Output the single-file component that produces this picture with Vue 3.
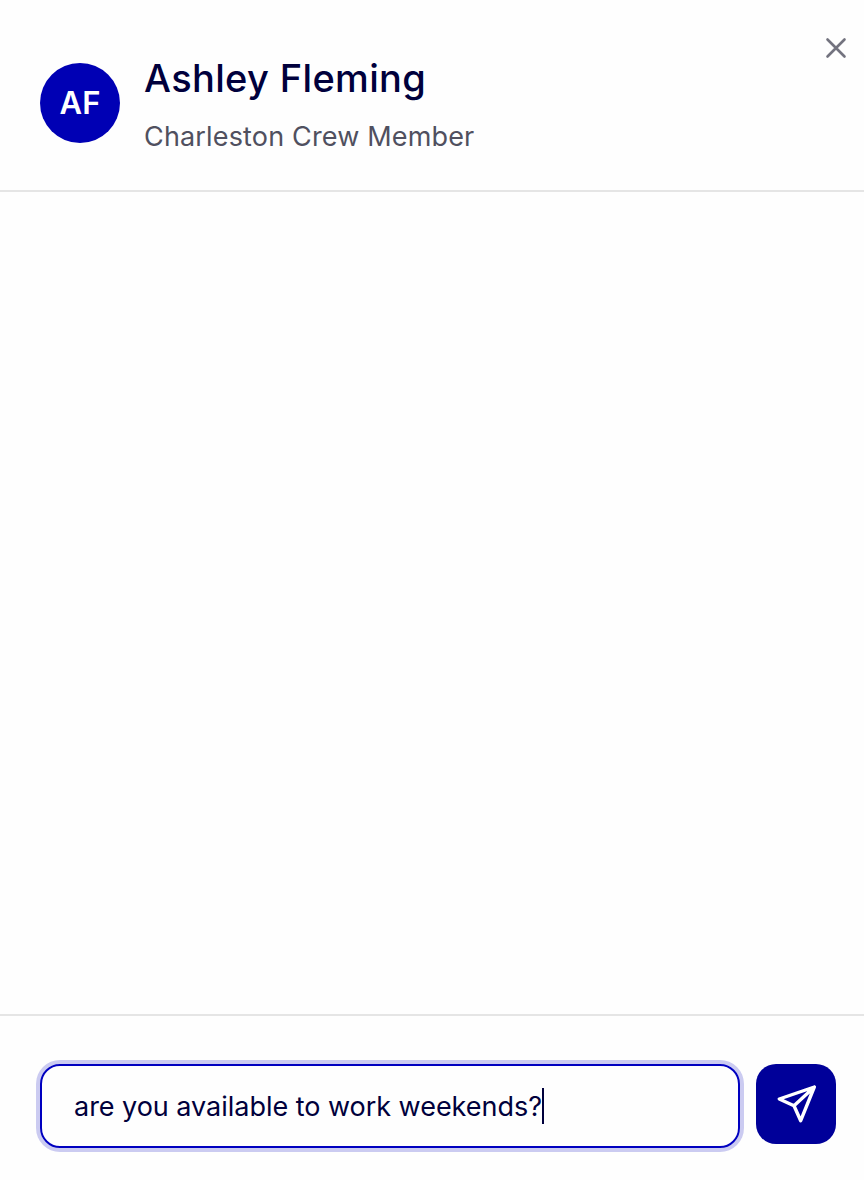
<script setup>
const name = 'Ashley Fleming';
const role = 'Charleston Crew Member';
const message = 'are you available to work weekends?';
</script>

<template>
  <div class="panel">
    <header class="head">
      <div class="avatar"><span class="initials">AF</span></div>
      <div class="who">
        <div class="name">{{ name }}</div>
        <div class="role">{{ role }}</div>
      </div>
      <button class="close" aria-label="Close">
        <svg width="24" height="24" viewBox="0 0 24 24" fill="none" stroke="#73737f" stroke-width="2.6" stroke-linecap="round">
          <path d="M3.5 3.5 L20.5 20.5 M20.5 3.5 L3.5 20.5" />
        </svg>
      </button>
    </header>
    <main class="thread"></main>
    <footer class="composer">
      <div class="field">
        <span class="typed">{{ message }}</span><span class="caret"></span>
      </div>
      <button class="send" aria-label="Send">
        <svg width="40" height="40" viewBox="0 0 40 40" fill="none" stroke="#fff" stroke-width="3.4" stroke-linejoin="round" stroke-linecap="round">
          <path d="M38.3 3 L3.3 15 L18 21.7 L24.7 36.7 Z M38.3 3 L18 21.7" />
        </svg>
      </button>
    </footer>
  </div>
</template>

<style>
body { background: #fefefe; }
</style>

<style scoped>
.panel {
  position: relative;
  height: 1180px;
  display: flex;
  flex-direction: column;
  font-family: "Inter", "Noto Sans", sans-serif;
  background: #fefefe;
}
.head {
  flex: none;
  display: flex;
  align-items: flex-start;
  gap: 24px;
  padding: 63px 40px 0;
  height: 127px;
  border-bottom: 2px solid #e5e5e5;
}
.avatar {
  width: 80px;
  height: 80px;
  flex: none;
  border-radius: 50%;
  background: #0000b4;
  color: #fff;
  font-size: 31px;
  font-weight: 600;
  display: flex;
  align-items: center;
  justify-content: center;
}
.initials { margin-top: -2px; }
.who { display: flex; flex-direction: column; gap: 19px; margin-top: -7px; }
.name { font-size: 38px; font-weight: 500; line-height: 44px; color: #00003c; letter-spacing: 0.35px; }
.role { font-size: 27px; line-height: 36px; color: #50505f; letter-spacing: 0.16px; }
.close {
  position: absolute;
  top: 36px;
  right: 16px;
  padding: 0;
  border: 0;
  background: none;
  line-height: 0;
}
.thread { flex: 1; }
.composer {
  height: 166px;
  flex: none;
  display: flex;
  gap: 16px;
  padding: 48px 28px 0 40px;
  border-top: 2px solid #e5e5e5;
  box-sizing: border-box;
  align-items: flex-start;
}
.field {
  flex: 1;
  height: 84px;
  box-sizing: border-box;
  border: 2px solid #0000c0;
  border-radius: 20px;
  box-shadow: 0 0 0 4px #cbcbf1;
  padding: 0 32px;
  display: flex;
  align-items: center;
  font-size: 27px;
  color: #00003c;
  letter-spacing: -0.03px;
}
.caret {
  width: 2px;
  height: 36px;
  background: #00003c;
  flex: none;
}
.send {
  width: 80px;
  height: 80px;
  flex: none;
  padding: 0;
  border: 0;
  border-radius: 20px;
  background: #000099;
  display: flex;
  align-items: center;
  justify-content: center;
}
</style>
